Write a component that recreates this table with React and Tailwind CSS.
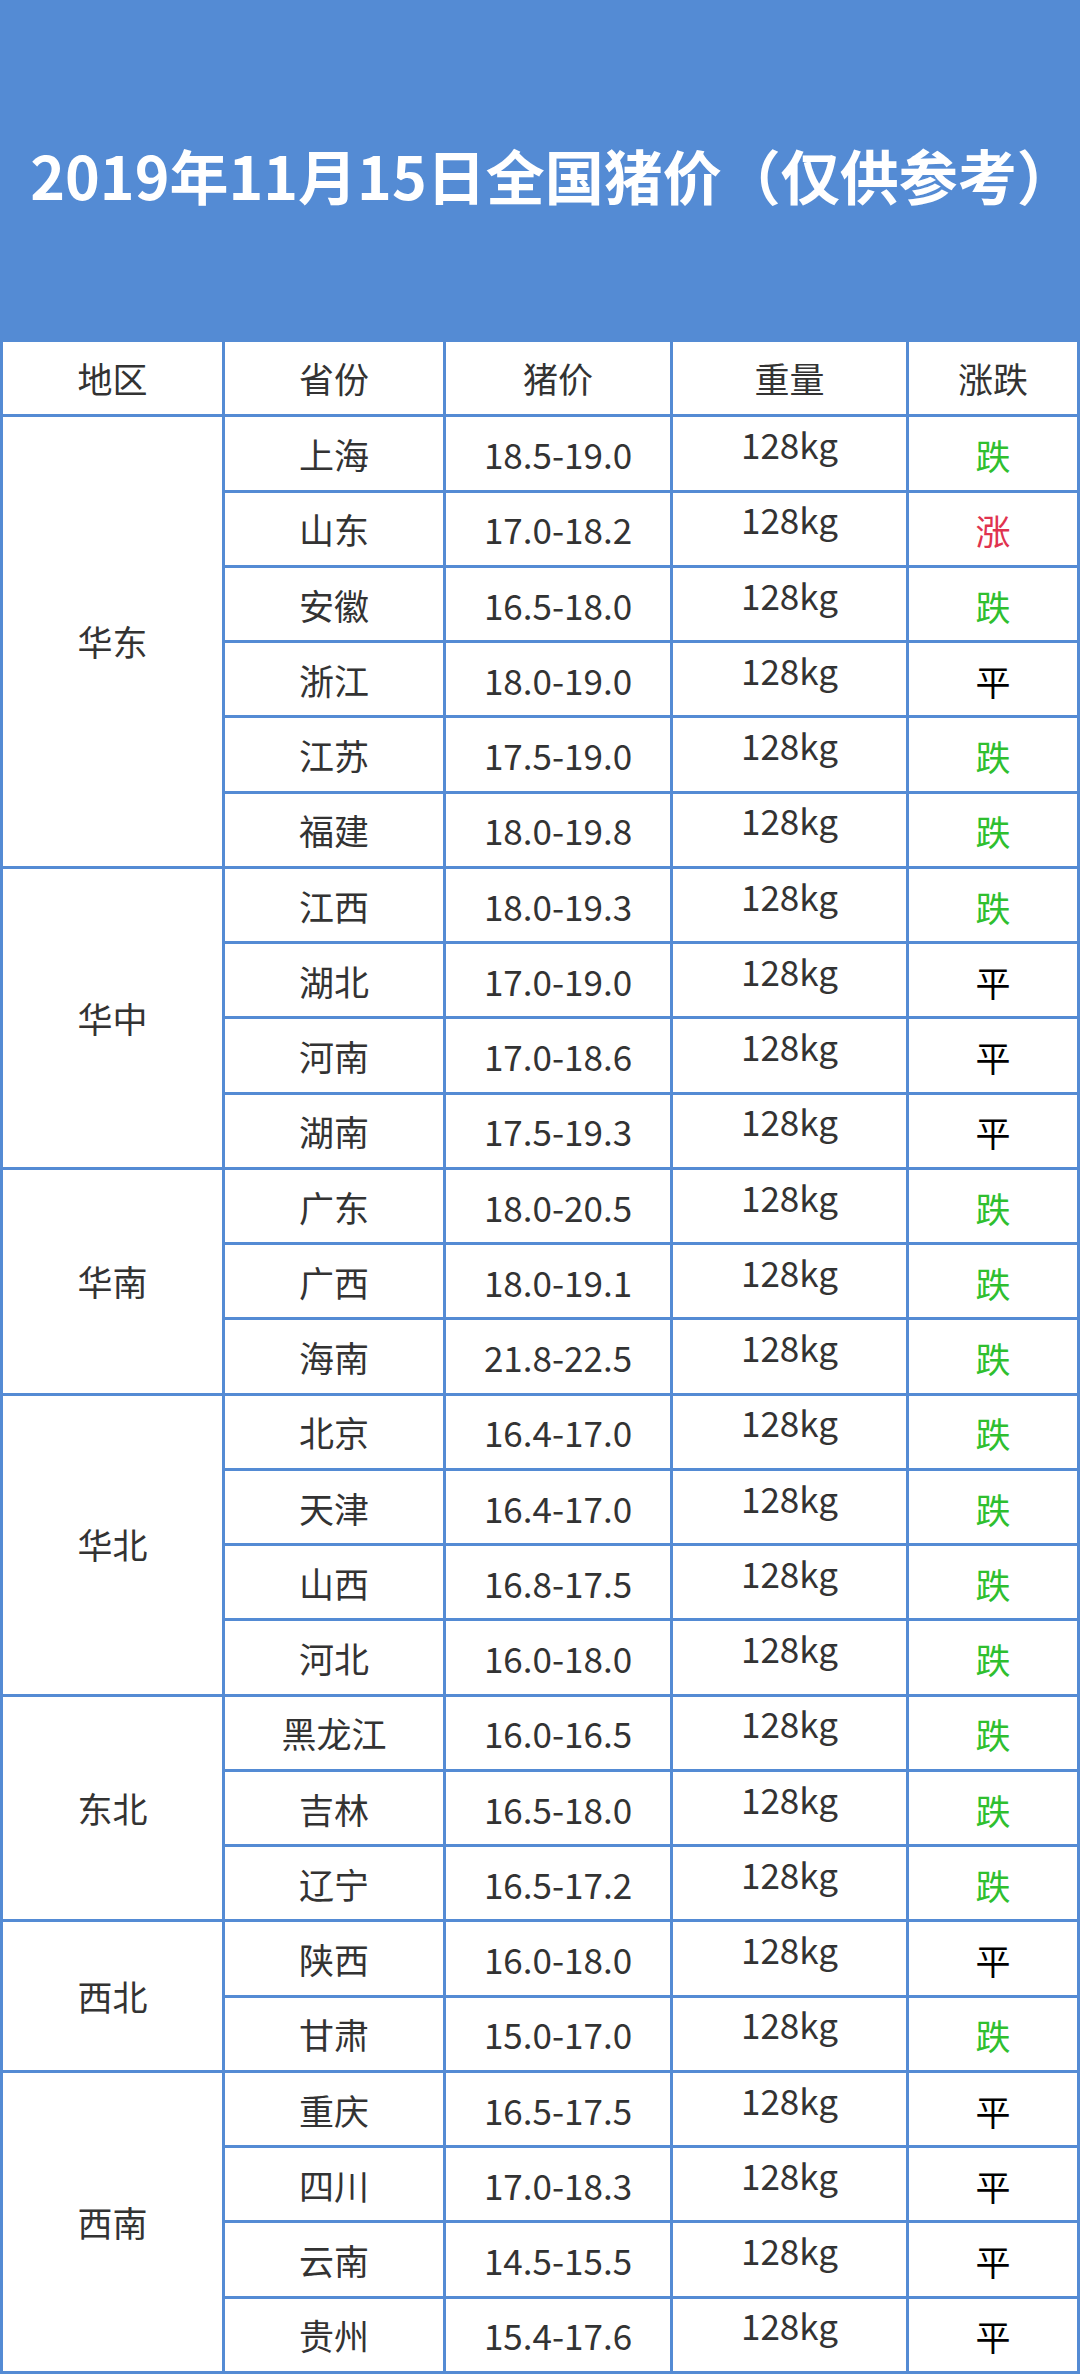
import React from 'react';

const regions = [
  {
    name: '华东',
    rows: [
      ['上海', '18.5-19.0', '跌'],
      ['山东', '17.0-18.2', '涨'],
      ['安徽', '16.5-18.0', '跌'],
      ['浙江', '18.0-19.0', '平'],
      ['江苏', '17.5-19.0', '跌'],
      ['福建', '18.0-19.8', '跌'],
    ],
  },
  {
    name: '华中',
    rows: [
      ['江西', '18.0-19.3', '跌'],
      ['湖北', '17.0-19.0', '平'],
      ['河南', '17.0-18.6', '平'],
      ['湖南', '17.5-19.3', '平'],
    ],
  },
  {
    name: '华南',
    rows: [
      ['广东', '18.0-20.5', '跌'],
      ['广西', '18.0-19.1', '跌'],
      ['海南', '21.8-22.5', '跌'],
    ],
  },
  {
    name: '华北',
    rows: [
      ['北京', '16.4-17.0', '跌'],
      ['天津', '16.4-17.0', '跌'],
      ['山西', '16.8-17.5', '跌'],
      ['河北', '16.0-18.0', '跌'],
    ],
  },
  {
    name: '东北',
    rows: [
      ['黑龙江', '16.0-16.5', '跌'],
      ['吉林', '16.5-18.0', '跌'],
      ['辽宁', '16.5-17.2', '跌'],
    ],
  },
  {
    name: '西北',
    rows: [
      ['陕西', '16.0-18.0', '平'],
      ['甘肃', '15.0-17.0', '跌'],
    ],
  },
  {
    name: '西南',
    rows: [
      ['重庆', '16.5-17.5', '平'],
      ['四川', '17.0-18.3', '平'],
      ['云南', '14.5-15.5', '平'],
      ['贵州', '15.4-17.6', '平'],
    ],
  },
];

const spanClass = {
  2: 'row-span-2',
  3: 'row-span-3',
  4: 'row-span-4',
  6: 'row-span-6',
};

const trendClass = {
  跌: 'text-[#2fbf2f]',
  涨: 'text-[#e0334f]',
  平: 'text-black',
};

const cell = 'bg-white flex items-center justify-center';

const App = () => {
  return (
    <div className="w-[1080px] bg-[#548bd4] font-['Noto_Sans_CJK_SC',sans-serif] text-[#333]">
      <div className="h-[342px] flex items-center justify-center pl-[26px] pt-[6px]">
        <h1 className="text-white font-bold text-[59px] leading-none">
          2019年11月15日全国猪价（仅供参考）
        </h1>
      </div>

      <div className="grid grid-cols-[219px_218px_224px_233px_168px] auto-rows-[72.25px] gap-[3px] p-[3px] pt-0 text-[35px]">
        {['地区', '省份', '猪价', '重量', '涨跌'].map((h) => (
          <div key={h} className={cell}>
            {h}
          </div>
        ))}

        {regions.map((region) =>
          region.rows.map((row, i) => (
            <React.Fragment key={row[0]}>
              {i === 0 && (
                <div className={`${cell} ${spanClass[region.rows.length]}`}>
                  {region.name}
                </div>
              )}
              <div className={`${cell} pt-[2px]`}>{row[0]}</div>
              <div className={`${cell} pt-[2px]`}>{row[1]}</div>
              <div className={`${cell} pb-[18px]`}>128kg</div>
              <div className={`${cell} pt-[4px] ${trendClass[row[2]]}`}>
                {row[2]}
              </div>
            </React.Fragment>
          ))
        )}
      </div>
    </div>
  );
};

export default App;
